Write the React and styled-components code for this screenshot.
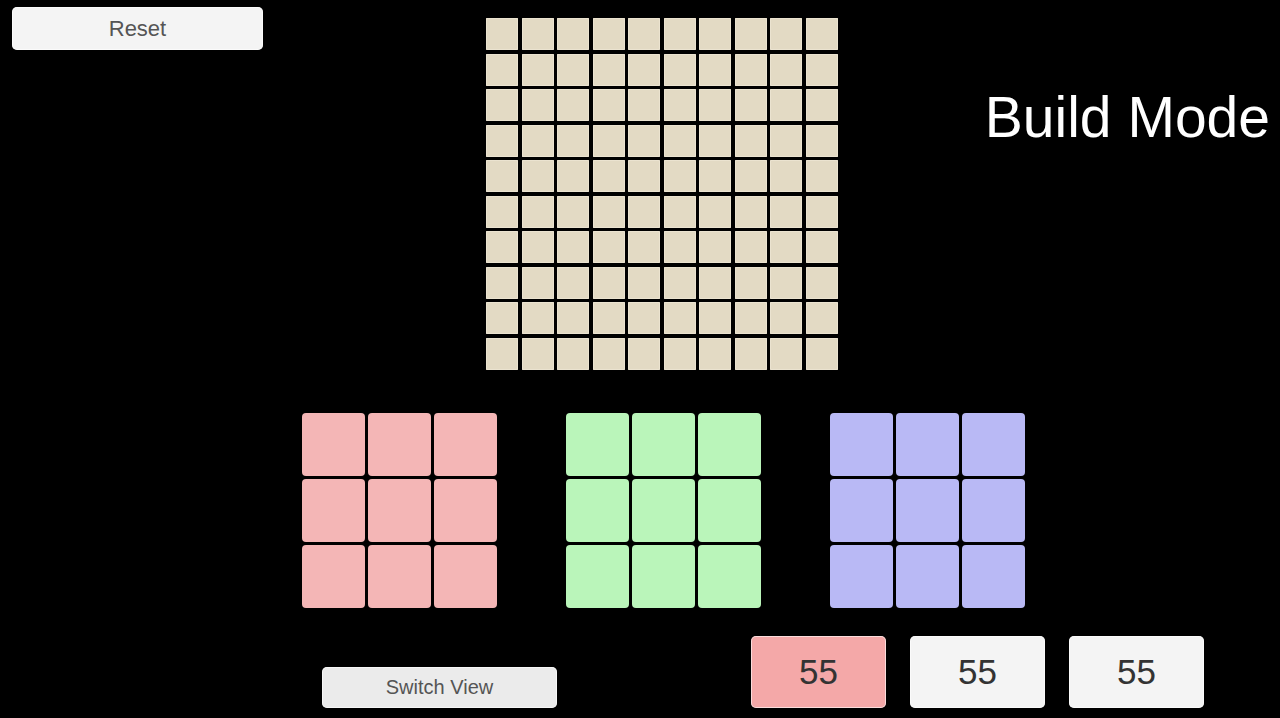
import React from "react";
import styled, { createGlobalStyle } from "styled-components";

const Global = createGlobalStyle`
  html, body { margin: 0; padding: 0; background: #000; }
  body { font-family: "Liberation Sans", Arial, sans-serif; overflow: hidden; }
`;

const Page = styled.div`
  width: 1280px;
  height: 718px;
  background: #000;
  display: flex;
  flex-direction: column;
`;

const TopSection = styled.div`
  display: grid;
  grid-template-columns: 486px 352px 1fr;
  height: 371px;
`;

const Button = styled.button`
  border: none;
  border-radius: 5px;
  background: ${(p) => p.$bg || "#f4f4f4"};
  color: ${(p) => p.$color || "#555"};
  font-family: "Liberation Sans", Arial, sans-serif;
  font-size: ${(p) => p.$size || 20}px;
  width: ${(p) => p.$w}px;
  height: ${(p) => p.$h}px;
  padding: 0;
  display: flex;
  align-items: center;
  justify-content: center;
  box-shadow: inset 0 0 0 1px rgba(255,255,255,0.6);
`;

const ResetWrap = styled.div`
  padding: 7px 0 0 12px;
`;

const Board = styled.div`
  margin-top: 18px;
  display: grid;
  grid-template-columns: repeat(10, 32px);
  grid-template-rows: repeat(10, 32px);
  gap: 3.5px;
  align-self: start;
`;

const BoardCell = styled.div`
  background: #e3dac4;
  border-radius: 1px;
  box-shadow: inset 0 0 0 1px #ebe3d0;
`;

const Title = styled.div`
  margin-top: 89px;
  padding-right: 10px;
  text-align: right;
  color: #fff;
  font-size: 57px;
  line-height: 1;
  white-space: nowrap;
`;

const PiecesRow = styled.div`
  display: flex;
  gap: 69px;
  padding-left: 302px;
  margin-top: 42px;
`;

const Piece = styled.div`
  display: grid;
  grid-template-columns: repeat(3, 63px);
  grid-template-rows: repeat(3, 63px);
  gap: 3px;
`;

const PieceCell = styled.div`
  background: ${(p) => p.$color};
  border-radius: 4px;
`;

const BottomRow = styled.div`
  display: flex;
  align-items: flex-end;
  padding-left: 322px;
  margin-top: 28px;
`;

const Counts = styled.div`
  display: flex;
  gap: 24px;
  margin-left: 194px;
`;

const cells100 = Array.from({ length: 100 });
const cells9 = Array.from({ length: 9 });

const pieces = ["#f4b6b6", "#baf5ba", "#b9b9f5"];
const counts = [
  { bg: "#f4a8a8" },
  { bg: "#f4f4f4" },
  { bg: "#f4f4f4" },
];

export default function App() {
  return (
    <Page>
      <Global />
      <TopSection>
        <ResetWrap>
          <Button $w={251} $h={43} $size={22}>Reset</Button>
        </ResetWrap>
        <Board>
          {cells100.map((_, i) => (
            <BoardCell key={i} />
          ))}
        </Board>
        <Title>Build Mode</Title>
      </TopSection>
      <PiecesRow>
        {pieces.map((c) => (
          <Piece key={c}>
            {cells9.map((_, i) => (
              <PieceCell key={i} $color={c} />
            ))}
          </Piece>
        ))}
      </PiecesRow>
      <BottomRow>
        <Button $w={235} $h={41} $bg="#ebebeb" $size={20}>Switch View</Button>
        <Counts>
          {counts.map((c, i) => (
            <Button key={i} $w={135} $h={72} $bg={c.bg} $color="#333" $size={35}>55</Button>
          ))}
        </Counts>
      </BottomRow>
    </Page>
  );
}
